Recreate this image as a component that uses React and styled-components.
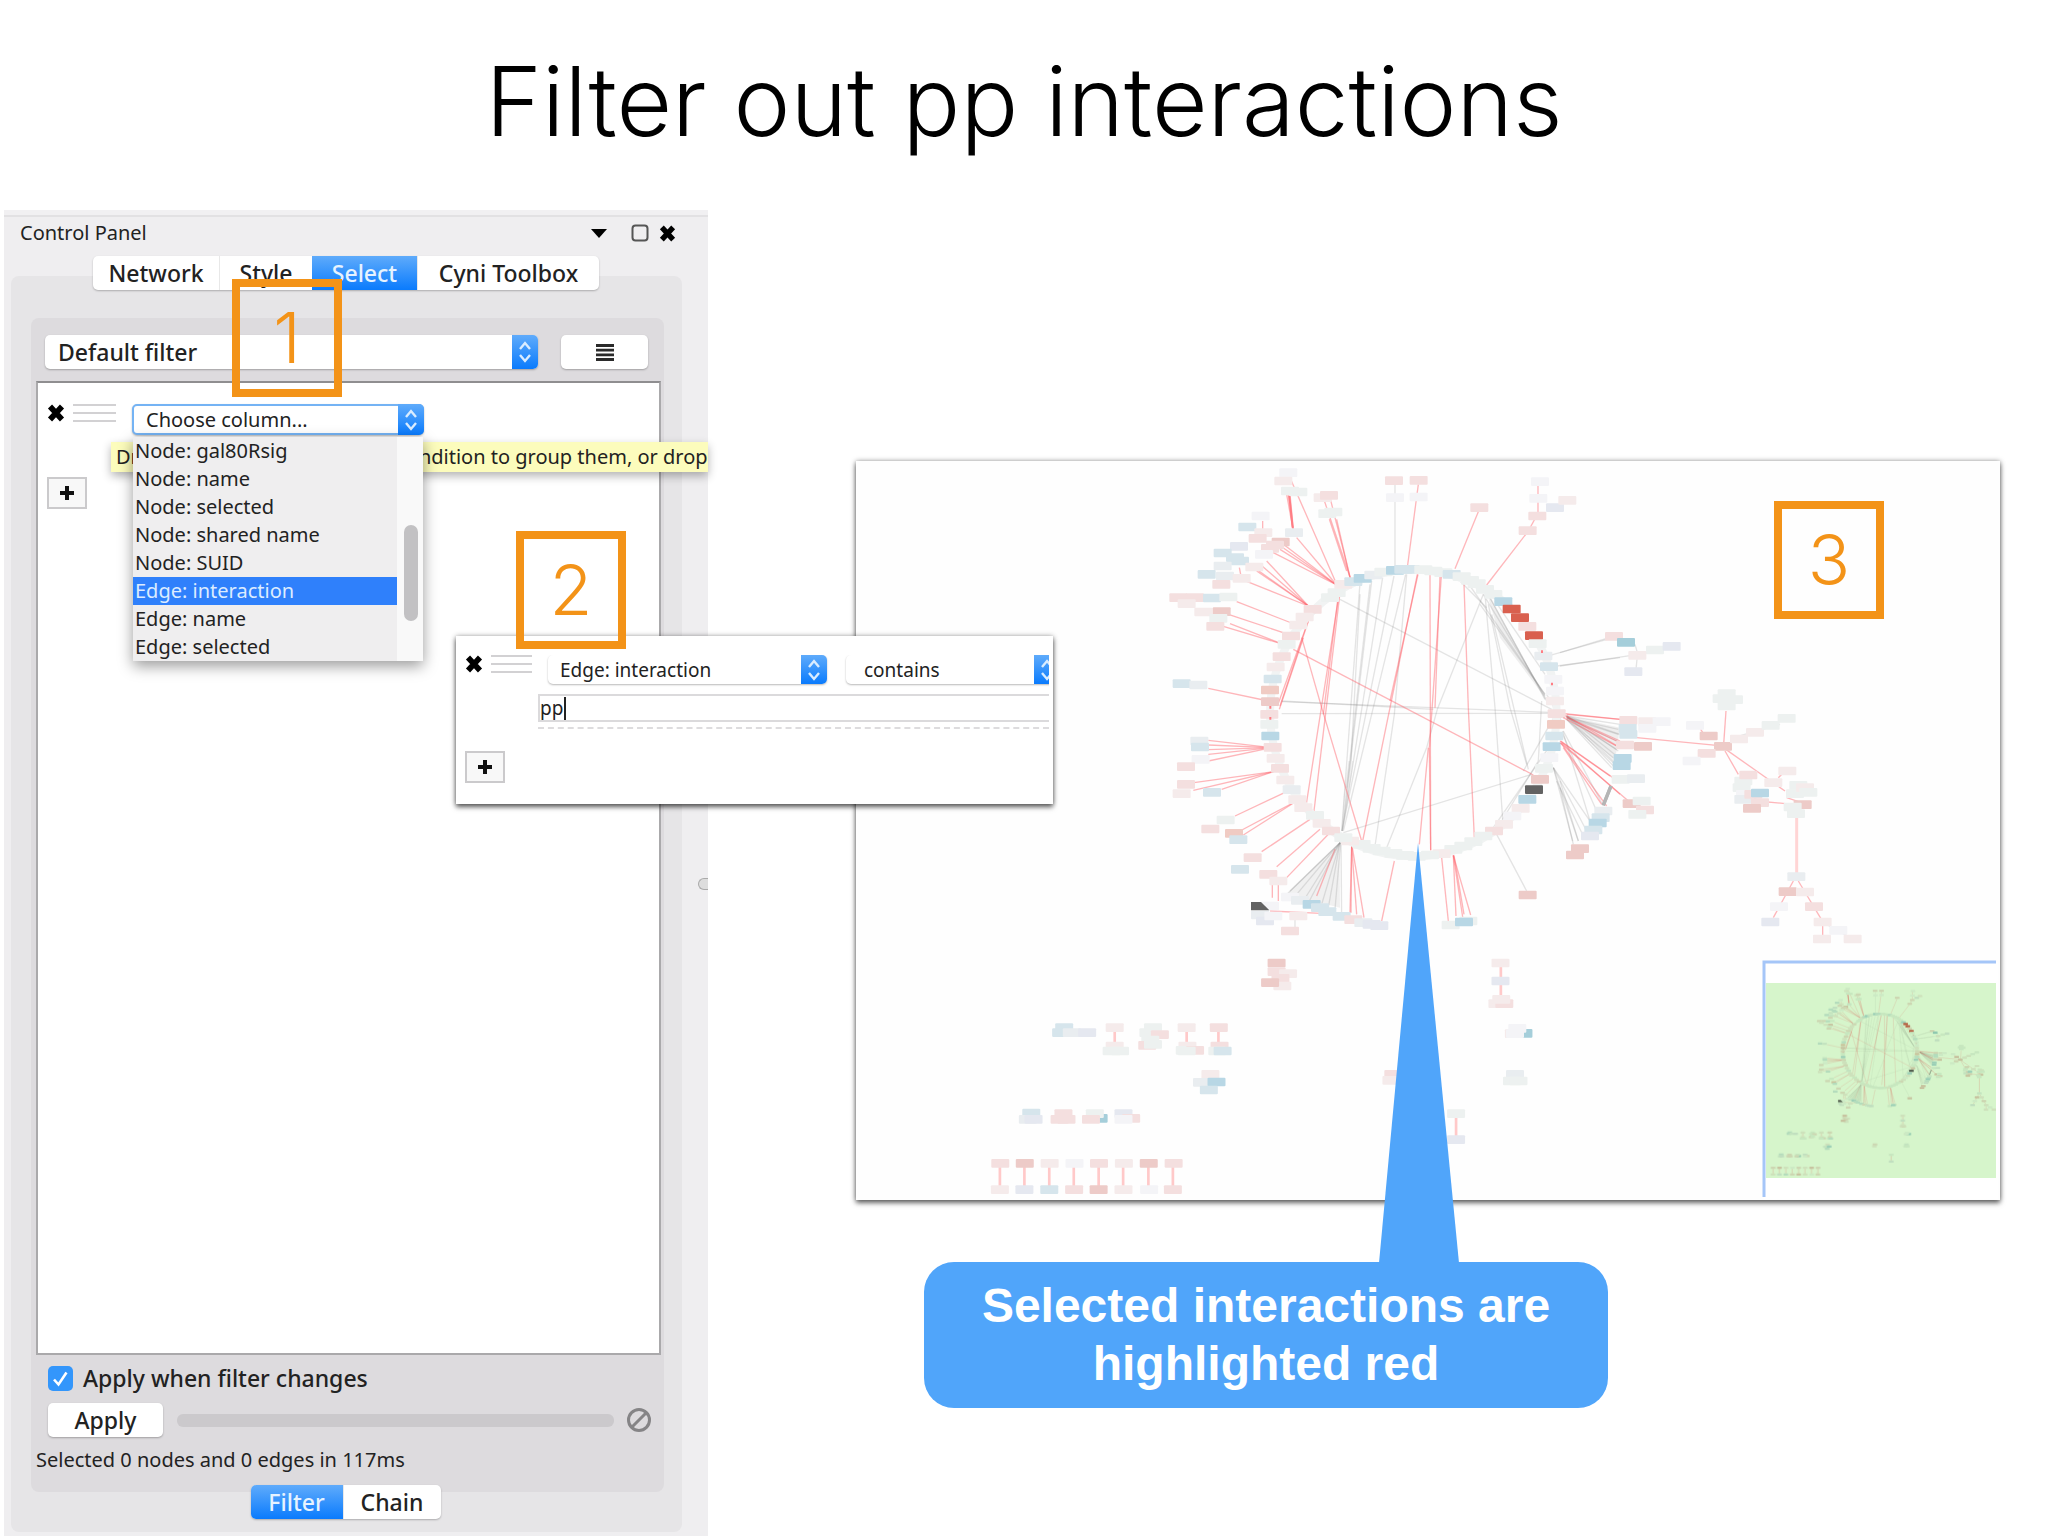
import React from "react";
import styled, { createGlobalStyle, css } from "styled-components";

const UI_FONT = `"Noto Sans", "Open Sans", sans-serif`;
const ORANGE = "#f39318";
const CALLOUT = "#50a5fa";

const GlobalStyle = createGlobalStyle`
  *, *::before, *::after { box-sizing: border-box; }
  body { margin: 0; background: #fff; }
  button, select, input { font: inherit; color: inherit; margin: 0; }
`;

/* ---------- slide ---------- */

const Slide = styled.main`
  display: flex;
  flex-direction: column;
  min-height: 100vh;
  background: #fff;
  overflow: hidden;
`;

const Title = styled.h1`
  margin: 0;
  padding: 41px 0 49px;
  font: 300 96px/120px Inter, "Liberation Sans", sans-serif;
  text-align: center;
  color: #000;
`;

const Body = styled.div`
  flex: 1;
  display: grid;
  grid-template-columns: 704px minmax(0, 1fr);
  column-gap: 148px;
  padding: 0 48px 0 4px;
`;

const Badge = styled.div`
  position: absolute;
  z-index: 5;
  display: flex;
  align-items: center;
  justify-content: center;
  width: 110px;
  height: 118px;
  border: 8px solid ${ORANGE};
  color: ${ORANGE};
  font: 300 70px/80px Inter, "Liberation Sans", sans-serif;
`;

const PanelBadge = styled(Badge)`
  top: 64px;
  left: 228px;
`;
const SnippetBadge = styled(Badge)`
  top: -105px;
  left: 60px;
`;
const NetworkBadge = styled(Badge)`
  top: 40px;
  right: 116px;
`;

/* ---------- control panel ---------- */

const Panel = styled.section`
  position: relative;
  z-index: 2;
  display: flex;
  flex-direction: column;
  padding-bottom: 4px;
  border-top: 5px solid #f1f0f2;
  background: #efeef0;
  box-shadow: inset 0 2px 0 #e2e1e3;
  color: #222;
  font: 20px/28px ${UI_FONT};
`;

const PanelHeader = styled.header`
  display: flex;
  align-items: center;
  height: 41px;
  padding: 0 32px 5px 16px;
`;

const PanelTitle = styled.h2`
  flex: 1;
  margin: 0;
  font: inherit;
`;

const IconButton = styled.button`
  flex: none;
  display: flex;
  align-items: center;
  justify-content: center;
  padding: 0;
  border: 0;
  background: none;
`;

const WindowButtons = styled.div`
  display: flex;
  align-items: center;
  gap: 10px;

  ${IconButton}:first-child { margin-right: 14px; }
`;

const Tabs = styled.div`
  position: relative;
  z-index: 1;
  align-self: center;
  display: flex;
  height: 34px;
  margin-right: 20px;
  border-radius: 5px;
  background: #fff;
  box-shadow: 0 1px 2px rgba(0, 0, 0, 0.25);
  font-size: 23px;
  font-weight: 500;
`;

const Tab = styled.button`
  width: ${(p) => p.$width}px;
  padding: 0;
  border: 0;
  border-left: 1px solid #e8e8e8;
  background: none;
  color: #222;
  line-height: 32px;

  &:first-child { border-left: 0; border-radius: 5px 0 0 5px; }

  ${(p) =>
    p.$active &&
    css`
      border: 0;
      background: linear-gradient(#5fabfb, #0a7bfd);
      color: #e6f3ff;
    `}
`;

const TabPage = styled.div`
  flex: 1;
  display: flex;
  flex-direction: column;
  margin: -14px 26px 0 7px;
  padding: 42px 18px 13px 20px;
  border-radius: 8px;
  background: #e6e5e7;
`;

const FilterPage = styled.div`
  flex: 1;
  display: flex;
  flex-direction: column;
  padding: 17px 3px 18px 5px;
  border-radius: 8px;
  background: #dddbde;
`;

const Toolbar = styled.div`
  display: flex;
  gap: 23px;
  margin-bottom: 12px;
  padding: 0 13px 0 9px;
  font-weight: 500;
`;

const SelectBox = styled.div`
  position: relative;
  flex: ${(p) => (p.$width ? "none" : "1")};
  width: ${(p) => (p.$width ? p.$width + "px" : "auto")};
  height: ${(p) => p.$height}px;
  font-size: ${(p) => p.$size}px;
`;

const NativeSelect = styled.select`
  appearance: none;
  width: 100%;
  height: 100%;
  padding: 0 30px 0 ${(p) => p.$indent}px;
  border: ${(p) => (p.$focused ? "2px solid #74b3f4" : "0")};
  border-radius: 5px;
  background: #fff;
  box-shadow: 0 1px 2px rgba(0, 0, 0, 0.28);
`;

const Stepper = styled.span`
  position: absolute;
  top: 0;
  right: 0;
  display: flex;
  align-items: center;
  justify-content: center;
  width: 26px;
  height: 100%;
  border-radius: 0 5px 5px 0;
  background: linear-gradient(#5fabfb, #0a7bfd);
  pointer-events: none;
`;

const PushButton = styled.button`
  display: flex;
  align-items: center;
  justify-content: center;
  width: ${(p) => p.$width}px;
  height: 34px;
  padding: 0;
  border: 0;
  border-radius: 5px;
  background: #fff;
  box-shadow: 0 1px 2px rgba(0, 0, 0, 0.28);
  font-size: 23px;
  font-weight: 500;
  color: #222;
`;

const Conditions = styled.div`
  flex: 1;
  padding: 21px 9px;
  border: 2px solid #aaa9ab;
  border-top-color: #8f8e90;
  background: #fff;
`;

const ConditionRow = styled.div`
  display: flex;
  align-items: flex-start;
  gap: 8px;
  margin-bottom: 42px;
`;

const DragHandle = styled.span`
  flex: none;
  width: ${(p) => (p.$small ? 41 : 43)}px;
  height: 18px;
  margin-right: 8px;
  border: solid #d2d1d3;
  border-width: 2px 0;
  background: linear-gradient(#d2d1d3, #d2d1d3) center / 100% 2px no-repeat;
`;

const AddButton = styled.button`
  display: flex;
  align-items: center;
  justify-content: center;
  width: 40px;
  height: 32px;
  padding: 0;
  border: 2px solid #cbcacc;
  background: #f8f8f8;
`;

const Tooltip = styled.div`
  position: absolute;
  top: 227px;
  left: 107px;
  right: 0;
  display: flex;
  gap: 280px;
  padding: 1px 0 1px 5px;
  background: #fcfcbc;
  box-shadow: 0 4px 10px rgba(0, 0, 0, 0.3);
  white-space: nowrap;
`;

const Popup = styled.div`
  position: absolute;
  z-index: 3;
  top: calc(100% + 2px);
  left: 1px;
  right: 1px;
  display: flex;
  background: #f9f9f9;
  box-shadow: 0 5px 14px rgba(0, 0, 0, 0.4);
`;

const Options = styled.ul`
  flex: 1;
  margin: 0;
  padding: 0;
  background: #efeeef;
  list-style: none;
`;

const Option = styled.li`
  padding-left: 2px;
  color: ${(p) => (p.$active ? "#dcecff" : "inherit")};
  background: ${(p) => (p.$active ? "#2f80fb" : "none")};
`;

const ScrollTrack = styled.div`
  width: 26px;
  padding: 88px 5px 0 7px;
`;

const ScrollThumb = styled.div`
  height: 96px;
  border-radius: 7px;
  background: #c2c1c3;
`;

const CheckLabel = styled.label`
  display: flex;
  align-items: center;
  gap: 10px;
  height: 26px;
  margin: 10px 12px 12px;
  font-size: 23px;
  font-weight: 500;
`;

const CheckWrap = styled.span`
  position: relative;
  display: flex;

  svg { position: absolute; inset: 0; pointer-events: none; }
`;

const Checkbox = styled.input`
  appearance: none;
  width: 25px;
  height: 25px;
  border-radius: 5px;
  background: #3396fb;
`;

const ApplyRow = styled.div`
  display: flex;
  align-items: center;
  gap: 12px;
  padding: 0 9px 0 12px;
`;

const Progress = styled.div`
  flex: 1;
  height: 13px;
  margin-left: 2px;
  border-radius: 6px;
  background: #cbc9cc;
`;

const Status = styled.p`
  margin: 9px 0 0;
`;

const BottomTabs = styled(Tabs)`
  margin: -7px 4px 0 0;
`;

const SplitHandle = styled.span`
  position: absolute;
  top: 663px;
  right: 0;
  width: 10px;
  height: 12px;
  border: 1px solid #aaa;
  border-right: 0;
  border-radius: 6px 0 0 6px;
  background: #ddd;
`;

/* ---------- condition snippet ---------- */

const Snippet = styled.section`
  position: absolute;
  z-index: 4;
  top: 421px;
  left: 452px;
  width: 597px;
  height: 168px;
  padding: 19px 4px 0 9px;
  background: #fff;
  box-shadow: 0 3px 5px rgba(0, 0, 0, 0.6), 0 0 5px rgba(0, 0, 0, 0.3);
  font-size: 19px;
`;

const SnippetRow = styled.div`
  display: flex;
  align-items: flex-start;
  gap: 8px;
  overflow: hidden;
  height: 32px;

  > div + div { margin-left: 11px; }
`;

const TermField = styled.div`
  margin: 7px 0 22px 73px;
  padding-bottom: 5px;
  border-bottom: 2px dashed #dddcde;
`;

const TermInput = styled.input`
  display: block;
  width: 100%;
  height: 28px;
  padding: 0;
  border: 2px solid #dbdadc;
  border-right: 0;
  border-radius: 0;
  background: #fff;
`;

const Caret = styled.span`
  position: absolute;
  top: 61px;
  left: 108px;
  width: 2px;
  height: 23px;
  background: #222;
`;

/* ---------- network view ---------- */

const Right = styled.div`
  padding-top: 251px;
`;

const NetworkCard = styled.figure`
  position: relative;
  margin: 0;
  background: #fefefe;
  box-shadow: 0 3px 5px rgba(0, 0, 0, 0.55), 0 0 5px rgba(0, 0, 0, 0.35);

  > svg { display: block; width: 100%; height: auto; }
`;

const Callout = styled.p`
  position: relative;
  z-index: 3;
  width: 684px;
  max-width: 100%;
  margin: 62px 0 0 68px;
  padding: 15px 40px;
  border-radius: 30px;
  background: ${CALLOUT};
  color: #fff;
  font: bold 48px/58px "Liberation Sans", Arial, sans-serif;
  text-align: center;
`;

const Pointer = styled.svg`
  position: absolute;
  left: 455px;
  bottom: calc(100% - 1px);
`;

/* ---------- icons ---------- */

const CrossIcon = ({ size = 18 }) => (
  <svg width={size} height={size} viewBox="0 0 18 18" aria-hidden="true">
    <path d="M3 2.5 15 15.5M15 2.5 3 15.5" stroke="#000" strokeWidth="5.6" />
  </svg>
);

const PlusIcon = () => (
  <svg width="16" height="16" viewBox="0 0 16 16" aria-hidden="true">
    <path d="M8 1v14M1 8h14" stroke="#111" strokeWidth="4" />
  </svg>
);

const Arrows = () => (
  <Stepper>
    <svg width="14" height="22" viewBox="0 0 14 22" aria-hidden="true">
      <path d="M2 8l5-6 5 6M2 14l5 6 5-6" fill="none" stroke="#d9ecff" strokeWidth="2.4" />
    </svg>
  </Stepper>
);

function Dropdown({ label, value, width, height, size, indent, focused, children }) {
  return (
    <SelectBox $width={width} $height={height} $size={size}>
      <NativeSelect aria-label={label} defaultValue={value} $indent={indent} $focused={focused}>
        <option>{value}</option>
      </NativeSelect>
      <Arrows />
      {children}
    </SelectBox>
  );
}

/* ---------- network drawing ---------- */

const C = {
  r: "#f4dfdf", p: "#f5ebeb", R: "#edcbc8", s: "#f0cbc3", b: "#d6e5ec", B: "#b8d7e5",
  g: "#e9edf0", l: "#f4f4f7", n: "#edf1f0", X: "#d9604f", k: "#626262", v: "#e5e8f0", t: "#a5ceda",
};

const redA = [
  [450,50,590,370],[440,100,459,205],[445,100,459,205],[450,100,460,205],[550,110,632,355],[570,110,632,355],
  [568,175,620,330],[590,175,630,350],[470,230,590,372],[400,240,590,372],[420,265,590,372],[400,275,590,372],
  [430,250,590,372],[835,70,803,312],[1018,145,945,323],[1165,210,1040,372],[1194,70,1194,165],[1192,160,1165,210],
  [360,310,505,435],[340,318,505,435],[380,300,505,435],[350,330,505,435],[305,355,505,435],[368,180,368,210],
  [290,422,470,492],[265,460,445,520],[230,490,430,550],[270,488,430,550],[205,682,385,720],
  [205,838,395,860],[205,852,395,860],[205,866,395,860],[205,880,395,860],[205,900,395,860],
  [140,968,400,932],[160,988,400,932],[245,985,400,932],[285,1065,440,992],[300,1110,470,1020],[310,1122,470,1020],
  [365,1172,510,1075],[410,1217,540,1105],[440,1250,565,1120],[598,395,498,1035],[600,395,522,1050],[596,395,550,760],
  [505,480,412,735],[490,530,418,745],[505,480,420,735],[485,530,545,740],[545,740,665,1140],
  [460,565,1180,942],[832,340,668,1140],[834,340,750,720],[870,340,872,1168],[904,345,868,860],[868,860,872,1168],
  [865,860,838,1150],[900,345,885,740],[972,370,985,740],[985,740,1003,1130],
  [635,1155,630,1355],[635,1155,650,1360],[637,1160,672,1370],[635,1155,633,1355],[763,1200,725,1380],
  [905,1190,925,1380],[940,1183,948,1365],[940,1183,968,1368],[940,1183,992,1362],[942,1183,972,1360],
  [585,1165,530,1305],[397,1270,397,1310],[415,1270,415,1320],[390,1350,560,1358],
  [1275,758,1450,776],[1275,765,1440,840],[1275,762,1440,860],[1262,840,1440,965],[1262,845,1400,1035],[1265,845,1440,1000],
  [390,690,392,860],[420,600,440,560],[298,320,305,355],
];
const grayA = [
  [765,70,765,320],[660,365,605,1110],[695,360,607,1110],[728,350,607,1110],[762,345,606,1110],[660,400,633,900],
  [690,370,620,980],[797,340,610,1110],[800,340,763,760],[763,760,705,1155],[600,415,1235,745],[425,722,1250,755],
  [425,758,1250,757],[425,720,880,745],[1030,400,892,745],[892,745,860,860],[860,860,740,1160],[1040,395,1220,720],
  [1045,400,1215,715],[1030,400,1215,705],[1020,430,1215,700],[960,360,1040,440],[980,360,1215,700],[1035,400,1065,740],
  [1065,740,1088,1075],[1055,460,1165,925],[1045,430,1110,740],[1110,740,1160,910],[1065,420,1215,640],[1205,720,1195,900],
  [1195,900,1085,1080],[1240,840,1060,1100],[1175,940,610,1115],[1250,755,1150,930],[1070,1120,1160,1290],
  [1230,583,1420,530],[1250,615,1440,590],[600,1145,450,1290],[600,1145,470,1300],[600,1145,490,1320],[600,1145,508,1320],
  [600,1145,545,1330],[600,1145,565,1340],[602,1145,585,1345],[603,1145,605,1370],[600,1145,430,1310],
  [1280,765,1440,790],[1280,765,1440,820],[1280,765,1435,870],[1280,765,1430,885],[1280,765,1425,905],[1280,768,1425,920],
  [1270,810,1390,1035],[1268,810,1350,1080],[1268,820,1370,1050],[1240,920,1298,1140],[1240,920,1315,1140],
  [1240,920,1340,1110],[1240,920,1360,1095],[1250,960,1330,1125],[465,1370,465,1400],[1220,700,1270,790],
];
const nodesA = [
  [445,35,"l"],[430,60,"p"],[450,90,"n"],[475,93,"n"],[548,110,"p"],[567,103,"r"],[562,158,"n"],[580,153,"n"],
  [362,165,"l"],[322,198,"b"],[370,215,"p"],[462,215,"g"],[353,232,"r"],[422,243,"R"],[405,252,"r"],[390,262,"r"],[372,280,"l"],
  [297,256,"v"],[248,276,"b"],[285,290,"b"],[300,300,"b"],[248,315,"g"],[343,318,"p"],[200,340,"b"],[255,345,"g"],[305,352,"p"],
  [244,370,"r"],[115,410,"r"],[165,410,"r"],[216,411,"b"],[140,428,"p"],[265,408,"n"],[190,453,"p"],[245,452,"R"],[235,472,"n"],[226,496,"r"],
  [762,59,"r"],[836,58,"r"],[765,110,"l"],[836,108,"l"],[1018,140,"r"],[1200,62,"l"],[1195,112,"l"],[1192,165,"r"],[1163,209,"r"],[1245,140,"v"],[1282,118,"p"],
  [518,445,"r"],[494,468,"p"],[475,492,"p"],[453,525,"r"],[440,550,"n"],[425,587,"r"],[407,618,"p"],[398,654,"b"],[390,687,"s"],[390,722,"R"],
  [388,760,"r"],[388,790,"n"],[391,825,"B"],[398,859,"r"],[407,892,"p"],[420,922,"r"],[436,957,"p"],[455,986,"g"],[472,1016,"p"],[490,1040,"p"],[525,1063,"n"],[545,1087,"p"],[573,1110,"r"],
  [125,668,"b"],[175,672,"g"],[178,840,"g"],[180,858,"b"],[182,895,"l"],[138,917,"r"],[138,970,"r"],[125,998,"p"],[216,994,"b"],
  [257,1077,"n"],[211,1104,"r"],[282,1117,"s"],[295,1136,"b"],[338,1190,"r"],[300,1225,"b"],[385,1240,"r"],[415,1260,"p"],
  [450,1308,"l"],[480,1318,"g"],[515,1330,"B"],[540,1340,"b"],[562,1352,"b"],[605,1366,"b"],[640,1376,"r"],[670,1385,"g"],[695,1390,"v"],[718,1394,"v"],
  [390,1335,"l"],[360,1362,"g"],[375,1380,"v"],[400,1365,"l"],[475,1365,"p"],[450,1410,"r"],
  [932,1392,"n"],[985,1380,"n"],[972,1383,"B"],[1163,1302,"R"],
  [570,410,"n"],[590,395,"n"],[610,370,"p"],[640,362,"b"],[668,352,"B"],[700,342,"g"],[730,333,"n"],[765,328,"B"],[790,325,"b"],[812,325,"b"],[850,326,"n"],[880,330,"n"],
  [910,335,"n"],[935,340,"b"],[965,347,"n"],[990,358,"n"],[1010,368,"n"],[1035,385,"n"],[1060,400,"n"],[1090,422,"B"],[1115,444,"X"],[1140,470,"X"],[1162,496,"r"],[1182,524,"X"],
  [1193,548,"n"],[1210,585,"g"],[1227,617,"b"],[1240,655,"l"],[1245,690,"l"],[1245,720,"p"],[1250,758,"r"],[1248,790,"s"],[1243,825,"b"],[1235,857,"B"],[1228,890,"l"],[1212,922,"n"],
  [1200,955,"R"],[1182,986,"k"],[1162,1015,"B"],[1142,1042,"p"],[1117,1065,"l"],[1092,1090,"p"],[1062,1110,"r"],[1030,1125,"n"],[1000,1142,"n"],[970,1155,"n"],[940,1165,"n"],[905,1178,"p"],[870,1182,"n"],
  [830,1186,"n"],[795,1183,"n"],[760,1177,"n"],[725,1170,"n"],[695,1162,"n"],[665,1150,"n"],[630,1140,"p"],[610,1130,"n"],
];

const redB = [
  [20,340,180,355],[20,350,170,420],[10,350,175,438],[230,410,470,433],[0,420,150,525],[0,425,215,608],[10,440,125,610],
  [498,330,491,430],[490,440,675,570],[495,450,535,520],[560,580,600,600],[590,600,700,610],[680,590,740,610],
  [700,840,640,950],[715,840,790,965],[788,960,788,1015],[422,385,432,400],[655,530,670,515],
];
const grayB = [
  [0,155,140,112],[0,195,215,163],[225,130,235,165],[232,165,228,205],[20,350,175,385],[20,350,175,400],[20,350,170,420],
  [20,350,170,445],[20,355,160,470],[20,355,160,485],[20,355,155,500],
  [0,560,40,730],[0,540,55,720],[520,410,660,370],[800,970,870,1010],
];
const nodesB = [
  [162,106,"r"],[198,124,"t"],[285,147,"n"],[335,136,"v"],[232,163,"p"],[220,212,"v"],[500,278,"n"],[485,293,"n"],[522,296,"n"],[500,315,"n"],
  [205,358,"r"],[262,362,"p"],[305,362,"l"],[262,382,"l"],[203,382,"b"],[205,400,"b"],[195,432,"r"],[249,436,"R"],[188,472,"B"],[185,494,"B"],[182,535,"n"],[228,533,"g"],
  [215,608,"R"],[245,600,"n"],[255,627,"r"],[232,640,"n"],[130,630,"g"],[122,650,"b"],[113,666,"B"],[100,687,"b"],[90,705,"v"],[60,743,"R"],[45,762,"R"],
  [405,373,"l"],[446,405,"R"],[489,436,"R"],[440,457,"r"],[395,480,"l"],[537,414,"p"],[585,394,"p"],[632,373,"n"],[680,352,"n"],
  [550,540,"n"],[565,522,"r"],[545,560,"n"],[555,580,"l"],[550,595,"g"],[580,580,"r"],[600,576,"B"],[600,605,"r"],[576,622,"R"],[640,545,"p"],[682,510,"p"],
  [715,553,"n"],[705,578,"n"],[735,560,"p"],[745,574,"n"],[728,611,"R"],[698,618,"n"],[708,638,"n"],
  [709,827,"g"],[683,872,"R"],[735,873,"p"],[657,917,"l"],[762,917,"r"],[631,963,"v"],[788,963,"p"],[835,988,"l"],[786,1014,"p"],[878,1014,"p"],
];

const redC = [
  [352,265,352,305],[540,265,540,305],[623,265,623,305],[1361,75,1361,115],[1361,125,1361,170],[1244,525,1244,585],
  ...[52,116,181,245,310,374,440,504].map((x) => [x, 675, x, 740]),
];
const nodesC = [
  [775,66,"R"],[775,92,"r"],[805,98,"p"],[785,112,"r"],[790,135,"p"],[758,125,"R"],
  [1360,66,"p"],[1360,120,"v"],[1352,188,"p"],[1370,188,"r"],[1362,175,"p"],
  [220,260,"b"],[212,275,"b"],[240,275,"g"],[280,275,"v"],[352,260,"p"],[352,315,"p"],[344,330,"n"],[366,330,"n"],
  [452,260,"n"],[440,275,"n"],[470,281,"r"],[445,297,"n"],[437,313,"r"],[452,310,"n"],
  [540,260,"p"],[542,315,"p"],[535,328,"n"],[562,328,"r"],[540,330,"n"],[624,260,"r"],[626,315,"r"],[620,330,"n"],[634,330,"b"],
  [602,400,"p"],[580,424,"g"],[618,423,"B"],[598,447,"b"],[1395,278,"p"],[1420,277,"t"],[1404,262,"l"],[1398,278,"l"],[1398,400,"g"],[1390,420,"n"],[1407,420,"n"],
  [1080,400,"r"],[1075,418,"p"],[1244,518,"n"],[1244,596,"v"],
  [134,516,"b"],[125,535,"g"],[140,535,"v"],[218,518,"r"],[208,535,"r"],[226,535,"r"],[310,532,"t"],[300,518,"n"],[290,535,"r"],[375,518,"v"],[395,532,"r"],[375,535,"l"],
  [53,667,"r"],[117,667,"R"],[182,667,"p"],[247,667,"l"],[311,667,"r"],[376,667,"p"],[441,667,"R"],[506,667,"r"],
  [52,746,"p"],[116,746,"v"],[181,746,"b"],[246,746,"r"],[310,746,"R"],[375,746,"p"],[442,746,"l"],[504,746,"r"],
];

const Lines = ({ data, color, width = 4 }) => (
  <g stroke={color} strokeWidth={width}>
    {data.map(([x1, y1, x2, y2], i) => (
      <line key={i} x1={x1} y1={y1} x2={x2} y2={y2} />
    ))}
  </g>
);

const Nodes = ({ data, w = 54, h = 26 }) =>
  data.map(([x, y, c], i) => (
    <rect key={i} x={x - w / 2} y={y - h / 2} width={w} height={h} rx="3" fill={C[c]} />
  ));

const RED = "rgba(255,95,105,.45)";
const GRAY = "rgba(125,125,125,.2)";

const Graph = () => (
  <>
    <g transform="translate(1140 460) scale(.33333)">
      <Lines data={grayA} color={GRAY} />
      <path d="M604 1115 612 1000 625 900 640 900 625 1010ZM598 1145 440 1300 520 1320 600 1340Z" fill="rgba(120,120,120,.1)" />
      <path d="M1045 410 1225 722 1200 690 1080 530ZM1280 765 1440 800 1425 900Z" fill="rgba(120,120,120,.12)" />
      <Lines data={redA} color={RED} />
      <path d="M1413 975 1390 1033" stroke="#b5b5b5" strokeWidth="10" />
      <ellipse cx="820" cy="756" rx="430" ry="430" fill="none" stroke="#f1f3f3" strokeWidth="24" />
      <Nodes data={nodesA} />
      <path d="M333 1323H363L388 1348H333Z" fill={C.k} />
      <path d="M448 105 458 200M391 735v8M391 768v8M1236 665v8M1206 568v8" stroke="#ff7d84" strokeWidth="6" />
    </g>
    <g transform="translate(1560 600) scale(.33333)">
      <Lines data={grayB} color={GRAY} />
      <Lines data={redB} color={RED} />
      <path d="M710 650V820" stroke="#ffd5d5" strokeWidth="9" />
      <Nodes data={nodesB} />
      <path d="M153 555 130 612" stroke="#b5b5b5" strokeWidth="10" />
    </g>
    <g transform="translate(980 940) scale(.3827 .33333)">
      <Lines data={redC} color="#ffc9c9" width={7} />
      <Nodes data={nodesC} w={47} />
    </g>
  </>
);

const Overview = styled.g`
  mix-blend-mode: multiply;
`;

function NetworkDrawing() {
  return (
    <svg viewBox="856 460 1144 739" role="img" aria-label="Network with selected edges in red">
      <Graph />
      <rect x="1764" y="961" width="234" height="237" fill="#fff" />
      <rect x="1766" y="982" width="230" height="195" fill="#d6f5cb" />
      <clipPath id="overview">
        <rect x="1766" y="982" width="230" height="195" />
      </clipPath>
      <Overview clipPath="url(#overview)">
        <g transform="translate(1880 1050) scale(.259) translate(-1413 -712)">
          <Graph />
        </g>
      </Overview>
      <path d="M1996 961H1764V1196" fill="none" stroke="#a5c6f8" strokeWidth="3" />
    </svg>
  );
}

/* ---------- page ---------- */

const OPTIONS = [
  "Node: gal80Rsig", "Node: name", "Node: selected", "Node: shared name",
  "Node: SUID", "Edge: interaction", "Edge: name", "Edge: selected",
];

function ControlPanel() {
  return (
    <Panel>
      <PanelHeader>
        <PanelTitle>Control Panel</PanelTitle>
        <WindowButtons>
          <IconButton aria-label="Panel menu">
            <svg width="16" height="9" viewBox="0 0 16 9"><path d="M0 0h16L8 9z" fill="#000" /></svg>
          </IconButton>
          <IconButton aria-label="Float panel">
            <svg width="18" height="18" viewBox="0 0 18 18">
              <rect x="1.5" y="1.5" width="15" height="15" rx="3" fill="none" stroke="#555" strokeWidth="2" />
            </svg>
          </IconButton>
          <IconButton aria-label="Close panel"><CrossIcon size={17} /></IconButton>
        </WindowButtons>
      </PanelHeader>

      <Tabs>
        <Tab $width={126}>Network</Tab>
        <Tab $width={93}>Style</Tab>
        <Tab $width={105} $active>Select</Tab>
        <Tab $width={182}>Cyni Toolbox</Tab>
      </Tabs>

      <TabPage>
        <FilterPage>
          <Toolbar>
            <Dropdown label="Filter" value="Default filter" height={34} size={23} indent={13} />
            <PushButton $width={87} aria-label="Filter options">
              <svg width="18" height="17" viewBox="0 0 18 17">
                <path d="M0 1.5h18M0 6.200h18M0 10.800h18M0 15.500h18" stroke="#2a2a2a" strokeWidth="2.800" />
              </svg>
            </PushButton>
          </Toolbar>

          <Conditions>
            <ConditionRow>
              <IconButton aria-label="Remove condition"><CrossIcon /></IconButton>
              <DragHandle />
              <Dropdown label="Column" value="Choose column..." width={292} height={31} size={20} indent={12} focused>
                <Popup>
                  <Options role="listbox" aria-label="Columns">
                    {OPTIONS.map((name) => {
                      const active = name === "Edge: interaction";
                      return (
                        <Option key={name} role="option" aria-selected={active} $active={active}>{name}</Option>
                      );
                    })}
                  </Options>
                  <ScrollTrack><ScrollThumb /></ScrollTrack>
                </Popup>
              </Dropdown>
            </ConditionRow>
            <AddButton aria-label="Add condition"><PlusIcon /></AddButton>
          </Conditions>

          <CheckLabel>
            <CheckWrap>
              <Checkbox type="checkbox" defaultChecked />
              <svg width="25" height="25" viewBox="0 0 25 25">
                <path d="M6 13.5l4.500 5L18.500 6.500" fill="none" stroke="#fff" strokeWidth="2.600" />
              </svg>
            </CheckWrap>
            Apply when filter changes
          </CheckLabel>

          <ApplyRow>
            <PushButton $width={115}>Apply</PushButton>
            <Progress />
            <IconButton aria-label="Cancel">
              <svg width="26" height="26" viewBox="0 0 26 26">
                <circle cx="13" cy="13" r="10.500" fill="none" stroke="#858486" strokeWidth="3" />
                <path d="M6 20 20 6" stroke="#858486" strokeWidth="3" />
              </svg>
            </IconButton>
          </ApplyRow>

          <Status>Selected 0 nodes and 0 edges in 117ms</Status>
        </FilterPage>

        <BottomTabs>
          <Tab $width={92} $active>Filter</Tab>
          <Tab $width={98}>Chain</Tab>
        </BottomTabs>
      </TabPage>

      <Tooltip>
        <span>Dr</span>
        <span>ndition to group them, or drop</span>
      </Tooltip>
      <SplitHandle />
      <PanelBadge>1</PanelBadge>

      <Snippet>
        <SnippetRow>
          <IconButton aria-label="Remove condition"><CrossIcon /></IconButton>
          <DragHandle $small />
          <Dropdown label="Column" value="Edge: interaction" width={279} height={29} size={19} indent={12} />
          <Dropdown label="Operator" value="contains" width={214} height={29} size={19} indent={18} />
        </SnippetRow>
        <TermField>
          <TermInput aria-label="Term" defaultValue="pp" />
        </TermField>
        <AddButton aria-label="Add condition"><PlusIcon /></AddButton>
        <Caret />
        <SnippetBadge>2</SnippetBadge>
      </Snippet>
    </Panel>
  );
}

export default function App() {
  return (
    <>
      <GlobalStyle />
      <Slide>
        <Title>Filter out pp interactions</Title>
        <Body>
          <ControlPanel />
          <Right>
            <NetworkCard>
              <NetworkDrawing />
              <NetworkBadge>3</NetworkBadge>
            </NetworkCard>
            <Callout>
              <Pointer width="80" height="420" viewBox="0 0 80 420" aria-hidden="true">
                <path d="M39 0 80 420H0Z" fill={CALLOUT} />
              </Pointer>
              Selected interactions are highlighted red
            </Callout>
          </Right>
        </Body>
      </Slide>
    </>
  );
}
